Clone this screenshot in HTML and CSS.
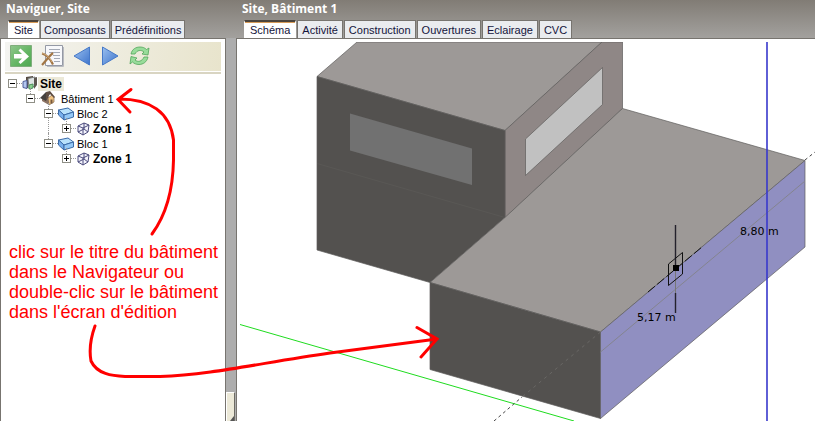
FILE: index.html
```html
<!DOCTYPE html>
<html lang="fr">
<head>
<meta charset="utf-8">
<title>Site, Bâtiment 1</title>
<link rel="stylesheet" href="styles.css">
</head>
<body>
<main class="app">
  <section class="pane">
    <h2 class="title">Naviguer, Site</h2>
    <nav class="tabs compact">
      <button class="tab active">Site</button>
      <button class="tab">Composants</button>
      <button class="tab">Prédéfinitions</button>
    </nav>
    <div class="body">
      <div class="toolbar">
        <button class="tool wide" aria-label="Aller"><svg width="22" height="22" viewBox="0 0 22 22"><defs><linearGradient id="gr" x2="1" y2="1"><stop offset="0" stop-color="#8fc68c"/><stop offset=".6" stop-color="#61b561"/><stop offset="1" stop-color="#4fa653"/></linearGradient></defs><path d="M.5.5h21v21H.5z" fill="url(#gr)" stroke="#7fae7c"/><path d="M4 9h8L8.500 5.500 10.500 3.500 19 11.500 10.500 19 8.500 17 12 13.500H4z" fill="#fff"/></svg></button>
        <button class="tool wide" aria-label="Supprimer"><svg width="23" height="22" viewBox="0 0 23 22"><path d="M4.500.5h17v20h-17z" fill="#f7f8fb" stroke="#9499a5"/><path d="M22.500 2v19.500H6" stroke="#b9bbc0" fill="none"/><path d="M8 4.500h11M8 7.500h11M12 10.500h7M13 13.500h6M13 16.500h6" stroke="#a3a9b5"/><path d="M1 8.500c4 1 8 5 11 11M12 8C8 11 5 16 1 20" stroke="#a27645" stroke-width="2.200" fill="none"/><path d="M1 8c4 1 8 5 10 9" stroke="#d3ad7c" fill="none"/></svg></button>
        <button class="tool" aria-label="Précédent"><svg width="18" height="20" viewBox="0 0 18 20"><defs><linearGradient id="bl" x2="1" y2="1"><stop offset="0" stop-color="#9bc0ef"/><stop offset="1" stop-color="#3d74cc"/></linearGradient></defs><path d="M16.500 1v18L1 10z" fill="url(#bl)" stroke="#4679c8"/></svg></button>
        <button class="tool" aria-label="Suivant"><svg width="18" height="20" viewBox="0 0 18 20"><path d="M1.500 1v18L17 10z" fill="url(#bl)" stroke="#4679c8"/></svg></button>
        <button class="tool" aria-label="Actualiser"><svg width="21" height="20" viewBox="0 0 21 20"><g fill="#98dc9a" stroke="#52a45a" stroke-width=".8" stroke-linejoin="round"><path d="M2 8C3 3 7 1 11 1c3 0 5 1 6.500 2.500L20 2l-1 7-6-1 2-2C12 3.500 8 4 6 8z"/><path d="M19 11c-1 5-5 7.500-9 7.500-3 0-5-1-6.500-2.500L1 18l1-7.500 6 1.500-2 2c3 2.500 7 1.500 9-3z"/></g></svg></button>
      </div>
      <ul class="tree">
        <li>
          <div class="row"><button class="expander" aria-label="Réduire Site"></button><span class="link"></span><svg width="16" height="15" viewBox="0 0 16 15"><path d="M4 1l7-1v2l-5 1v9H4z" fill="#544940"/><path d="M6 2.500L13 1v8l-3 3H7z" fill="#dfe4e4" stroke="#797c7a"/><path d="M12 2l3-1v8l-3 4z" fill="#5d5650"/><path d="M1 5.500l4-1v8l-4-1z" fill="#b3c6ef" stroke="#4d5c98"/><path d="M7 9l4-1v4l-4 1z" fill="#8bd08d" stroke="#4d8f5c"/></svg><b class="label selected">Site</b></div>
          <ul>
            <li>
              <div class="row"><button class="expander" aria-label="Réduire Bâtiment 1"></button><span class="link"></span><svg width="16" height="15" viewBox="0 0 16 15"><path d="M2 6l5-4 2 5v7l-7-4z" fill="#8a7263"/><path d="M8 7l4-3 2 2v5l-5 3z" fill="#f0c483" stroke="#80664e" stroke-width=".7"/><path d="M0 7l6-6 4 1-4 8z" fill="#44403d"/><path d="M6 1l4-1 5 6-1 1-4-4-4 6z" fill="#5e4d42"/><path d="M11.500 8.500v4" stroke="#76583d" stroke-width="2"/></svg><span class="label gap">Bâtiment 1</span></div>
              <ul>
                <li>
                  <div class="row"><button class="expander" aria-label="Réduire Bloc 2"></button><span class="link"></span><svg width="16" height="14" viewBox="0 0 16 14"><g stroke="#3c6ba8" stroke-linejoin="round"><path d="M.5 3L10 1l5.500 4L6 8z" fill="#b8e1fc"/><path d="M.5 3L6 8v5L.5 8z" fill="#78b0ee"/><path d="M6 8l9.500-3v5L6 13z" fill="#94c8f6"/></g></svg><span class="label">Bloc 2</span></div>
                  <ul><li><div class="row"><button class="expander plus" aria-label="Développer Zone 1"></button><span class="link"></span><svg width="15" height="14" viewBox="0 0 15 14"><g fill="none" stroke="#4b4b7c"><path d="M2 4l6-3 5 2-1 7-5 3-5-3z" fill="#f3f3fc"/><path d="M2 4l5 2 6-3M7 6v7M8 1v6l4 3M8 7l-6 3"/></g></svg><b class="label">Zone 1</b></div></li></ul>
                </li>
                <li>
                  <div class="row"><button class="expander" aria-label="Réduire Bloc 1"></button><span class="link"></span><svg width="16" height="14" viewBox="0 0 16 14"><g stroke="#3c6ba8" stroke-linejoin="round"><path d="M.5 3L10 1l5.500 4L6 8z" fill="#b8e1fc"/><path d="M.5 3L6 8v5L.5 8z" fill="#78b0ee"/><path d="M6 8l9.500-3v5L6 13z" fill="#94c8f6"/></g></svg><span class="label">Bloc 1</span></div>
                  <ul><li><div class="row"><button class="expander plus" aria-label="Développer Zone 1"></button><span class="link"></span><svg width="15" height="14" viewBox="0 0 15 14"><g fill="none" stroke="#4b4b7c"><path d="M2 4l6-3 5 2-1 7-5 3-5-3z" fill="#f3f3fc"/><path d="M2 4l5 2 6-3M7 6v7M8 1v6l4 3M8 7l-6 3"/></g></svg><b class="label">Zone 1</b></div></li></ul>
                </li>
              </ul>
            </li>
          </ul>
        </li>
      </ul>
    </div>
  </section>
  <div class="splitter"><button class="grip" aria-label="Masquer le navigateur"><svg width="4" height="5" viewBox="0 0 4 5"><path d="M4 0v5H0z" fill="#555"/></svg></button></div>
  <section class="pane">
    <h2 class="title">Site, Bâtiment 1</h2>
    <nav class="tabs">
      <button class="tab active">Schéma</button>
      <button class="tab">Activité</button>
      <button class="tab">Construction</button>
      <button class="tab">Ouvertures</button>
      <button class="tab">Eclairage</button>
      <button class="tab">CVC</button>
    </nav>
    <div class="body open">
      <svg class="scene" viewBox="237 42 578 379" preserveAspectRatio="xMinYMin slice">
        <path d="M240 324.500L574 421" stroke="#1fdc1f"/>
        <path d="M494 421L522 397M805 160L815 152" stroke="#444" stroke-dasharray="3 3"/>
        <g stroke="#5f5d5b" stroke-width=".7">
          <path d="M317 76.500L357 42H602L505 130.500z" fill="#9d9997"/>
          <path d="M505 130.500L602 42H622.500V108.500L505 217.500z" fill="#8f8786"/>
          <path d="M317 76.500L505 130.500V217.500L430 282.500 317 250z" fill="#53514f"/>
          <path d="M430 282.500L505 217.500 622.500 108.500 805 160.500 600.500 332z" fill="#9d9997"/>
          <path d="M430 282.500L600.500 332V418.500L430 369.500z" fill="#53514f"/>
          <path d="M600.500 332L805 160.500V247L600.500 418.500z" fill="#908fc1"/>
          <path d="M525.500 139L602.500 67.500V104.500L525.500 175.500z" fill="#c1c1c1"/>
        </g>
        <path d="M350 113.500L472 148.500V185L350 150.500z" fill="#717171"/>
        <path d="M317 163.500L505 217.500" stroke="#5c5a58" stroke-width=".7"/>
        <path d="M600.500 332L522 397" stroke="#73716f" stroke-dasharray="3 4" stroke-width=".7"/>
        <path d="M600.500 352L805 181" stroke="#84848f"/>
        <path d="M767 42V421" stroke="#3838cc" stroke-width="1.600"/>
        <path d="M648 292L702 247" stroke="#111" stroke-dasharray="9 3"/>
        <path d="M675.500 225V265M675.500 293V313" stroke="#24222c" stroke-width="1.400"/>
        <path d="M675.500 271V293" stroke="#777"/>
        <path d="M668.500 264L682.500 252.500V274L668.500 285.500z" fill="none" stroke="#111"/>
        <path d="M673 265h6v6h-6z"/>
        <text x="740" y="235">8,80 m</text>
        <text x="637" y="321">5,17 m</text>
      </svg>
    </div>
  </section>
  <p class="note">clic sur le titre du bâtiment<br>dans le Navigateur ou<br>double-clic sur le bâtiment<br>dans l'écran d'édition</p>
  <svg class="arrows" width="450" height="390" viewBox="0 0 450 390">
    <path d="M152 234C166 215 173 190 173.500 160V140C170 112 150 99 119 99M131 89.500L118 99.500 130 112"/>
    <path d="M95 326C91 337 89 350 91 361C97 374 112 376 125 376.500H160C210 375 260 363 330 353L437 339M417 327.500L437 339 421 357"/>
  </svg>
</main>
</body>
</html>
```
FILE: styles.css
```css
* { box-sizing: border-box; }
body { margin: 0; background: #fff; }
button { border: 0; padding: 0; background: none; font: inherit; color: inherit; }
svg { display: block; flex: none; }
ul { list-style: none; margin: 0; padding: 0; }

.app {
  position: relative;
  display: grid;
  grid-template-columns: 226px 10px minmax(0, 1fr);
  min-height: 100vh;
  overflow: hidden;
  background: #adadad linear-gradient(#817c75, #a3a19e) 0 0 / 100% 38px no-repeat;
  font: 11px/14px "Liberation Sans", Arial, sans-serif;
  color: #000;
}
.pane { display: flex; flex-direction: column; min-width: 0; }
.title {
  margin: 0;
  padding: 0 6px;
  height: 20px;
  font: bold 12px/18px "Open Sans", Verdana, sans-serif;
  color: #fff;
}
.tabs { display: flex; gap: 1px; padding-left: 8px; height: 18px; }
.tab {
  padding: 1px 4px 0;
  border: solid #77746f;
  border-width: 1px 1px 0;
  background: #eaecef;
  color: #14143c;
}
.compact .tab { padding: 1px 3px 0; }
.tabs .active {
  padding: 0 5px;
  border-color: #fff;
  border-top: 2px solid #4b443d;
  background: #fff;
  box-shadow: inset 0 1px #d79b58;
}
.body {
  flex: 1;
  display: flex;
  flex-direction: column;
  padding-top: 3px;
  border: solid #77746f;
  border-width: 1px 1px 0;
  background: #fff;
}
.open { border-right: 0; }

.toolbar {
  display: flex;
  align-items: center;
  gap: 10px;
  height: 32px;
  margin: 0 4px;
  padding: 0 5px 3px;
  border-bottom: 2px solid #d9d5c2;
  background: linear-gradient(100deg, #f4f4f1, #e8e4cc) 0 0 / 100% 29px no-repeat;
}
.wide { margin-right: -1px; }

.tree { padding: 2px 0 0 7px; }
.tree ul { margin-left: 18px; }
.tree li { position: relative; }
.tree ul > li::before {
  content: "";
  position: absolute;
  left: 4px;
  top: -3px;
  height: 6px;
  border-left: 1px dotted #999;
}
.tree ul > li:not(:last-child)::before { height: 38px; }
.row { position: relative; display: flex; align-items: center; height: 15px; }
.expander {
  width: 9px;
  height: 9px;
  border: 1px solid #8f8f86;
  background: linear-gradient(#000, #000) center / 5px 1px no-repeat, #fff;
}
.plus {
  background: linear-gradient(#000, #000) center / 5px 1px no-repeat, linear-gradient(#000, #000) center / 1px 5px no-repeat, #fff;
}
.link { width: 5px; border-top: 1px dotted #999; }
.label { padding: 0 3px; }
.gap { margin-left: 2px; }
b.label { font-size: 12px; padding: 0 2px; }
.selected { background: #ece9d8; }

.splitter { display: flex; align-items: flex-end; }
.grip {
  display: flex;
  align-items: flex-end;
  justify-content: flex-end;
  width: 9px;
  height: 29px;
  border: 1px solid #fff;
  border-right-color: #6d6b64;
  border-bottom: 0;
  background: #ece9d8;
}

.scene { flex: 1 1 0; width: 100%; min-height: 0; }
.scene text { font: 11px "DejaVu Sans", Verdana, sans-serif; fill: #000; }

.note {
  position: absolute;
  left: 9px;
  top: 242px;
  margin: 0;
  font: 18px/20px "Liberation Sans", Arial, sans-serif;
  color: #f00;
}
.arrows {
  position: absolute;
  left: 0;
  top: 0;
  fill: none;
  stroke: #f00;
  stroke-width: 3px;
  stroke-linecap: round;
  pointer-events: none;
}
```
